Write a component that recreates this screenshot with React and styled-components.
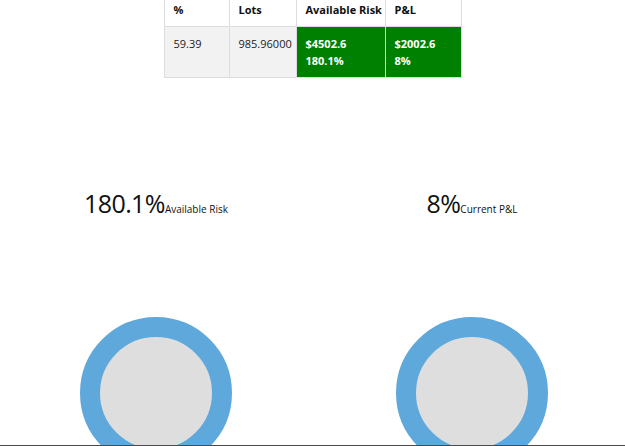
import React from 'react';
import styled, { createGlobalStyle } from 'styled-components';

const GlobalStyle = createGlobalStyle`
    body {
        margin: 0;
        background: #fff;
        font-family: "Open Sans", "Noto Sans", sans-serif;
        color: #111;
        overflow: hidden;
    }
`

const Page = styled.div`
    display: flex;
    flex-direction: column;
`

const Table = styled.table`
    margin: 0 auto;
    width: 297px;
    table-layout: fixed;
    border-collapse: collapse;
    font-size: 11px;
    th, td {
        text-align: left;
        vertical-align: top;
        border: 1px solid #dcdde0;
        line-height: 17px;
        white-space: nowrap;
    }
    th {
        padding: 1px 9px 8px;
        font-weight: 700;
        background: #fff;
        border-top: none;
    }
    td {
        padding: 8px 9px;
    }
`

const Col = styled.col`
    width: ${p => p.w}px;
`

const Cell = styled.td`
    background: ${p => (p.good ? '#008000' : '#f2f2f2')};
    color: ${p => (p.good ? '#fff' : '#222')};
    font-weight: ${p => (p.good ? 700 : 400)};
`

const Gauges = styled.div`
    display: flex;
    padding: 0 0 0 76px;
    gap: 156px;
    margin-top: 108px;
`

const Gauge = styled.div`
    width: 160px;
    display: flex;
    flex-direction: column;
    align-items: center;
`

const Label = styled.div`
    display: flex;
    align-items: baseline;
    white-space: nowrap;
`

const Big = styled.span`
    font-size: 25px;
    font-weight: 400;
    letter-spacing: -0.6px;
`

const Small = styled.span`
    font-size: 10px;
`

const Ring = styled.div`
    margin-top: 97px;
    width: 152px;
    height: 152px;
    box-sizing: border-box;
    border-radius: 50%;
    border: 20px solid #5fa8dc;
    background: #dedede;
    flex-shrink: 0;
`

const BottomEdge = styled.div`
    position: fixed;
    left: 0;
    right: 0;
    bottom: 0;
    height: 1px;
    background: #4a4a4a;
`

const App = () => {
    return (
        <Page>
            <GlobalStyle />
            <Table>
                <colgroup>
                    <Col w={65} />
                    <Col w={67} />
                    <Col w={89} />
                    <Col w={76} />
                </colgroup>
                <thead>
                    <tr>
                        <th>%</th>
                        <th>Lots</th>
                        <th>Available Risk</th>
                        <th>P&amp;L</th>
                    </tr>
                </thead>
                <tbody>
                    <tr>
                        <Cell>59.39</Cell>
                        <Cell>985.96000</Cell>
                        <Cell good>$4502.6<br />180.1%</Cell>
                        <Cell good>$2002.6<br />8%</Cell>
                    </tr>
                </tbody>
            </Table>
            <Gauges>
                <Gauge>
                    <Label><Big>180.1%</Big><Small>Available Risk</Small></Label>
                    <Ring />
                </Gauge>
                <Gauge>
                    <Label><Big>8%</Big><Small>Current P&amp;L</Small></Label>
                    <Ring />
                </Gauge>
            </Gauges>
            <BottomEdge />
        </Page>
    );
};

export default App;
